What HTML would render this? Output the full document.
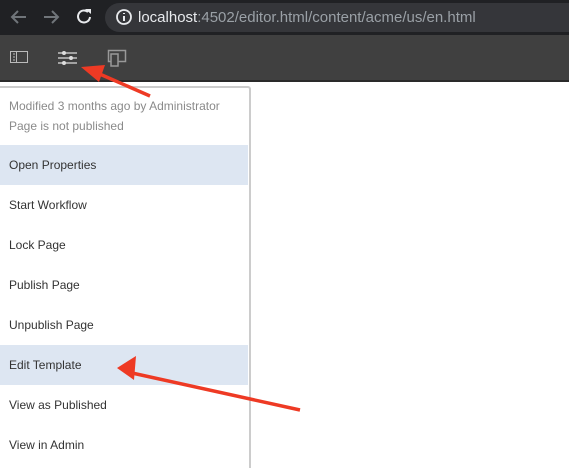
<!DOCTYPE html>
<html style="height:468px;overflow:hidden"><head><style>
html,body{height:468px;overflow:hidden}
body{margin:0;width:569px;background:#fff;font-family:"Liberation Sans",sans-serif;position:relative}
.chrome{position:absolute;left:0;top:0;width:569px;height:35px;background:#202124}
.url{position:absolute;left:105px;top:3px;width:480px;height:29px;border-radius:15px;background:#35363a}
.url span{position:absolute;left:33px;top:6px;font-size:15px;color:#9aa0a6}
.url b{font-weight:normal;color:#e8eaed}
.tb{position:absolute;left:0;top:35px;width:569px;height:45px;background:#404040;border-bottom:2px solid #2a2a2a}
.menu{position:absolute;left:-3px;top:86px;width:250px;height:382px;border:2px solid #ccc;border-bottom:none;border-radius:3px 3px 0 0;background:#fff}
.info{position:absolute;left:9px;top:97px;font-size:12px;color:#8a8a8a;line-height:19.5px}
.item{position:absolute;left:0;width:248px;height:40px;line-height:40px;font-size:12px;color:#333;padding-left:9px;box-sizing:border-box}
.hl{background:#dde6f2}
</style></head><body>
<div class="chrome">
<svg width="100" height="35" style="position:absolute;left:0;top:0">
<path d="M26 17H12M18 11l-6 6 6 6" stroke="#70757a" stroke-width="2" fill="none"/>
<path d="M44 17h14M52 11l6 6-6 6" stroke="#70757a" stroke-width="2" fill="none"/>
<path d="M88 12a6 6 0 1 0 2 5" stroke="#e8eaed" stroke-width="2" fill="none"/><path d="M85 9h6v5z" fill="#e8eaed"/>
</svg>
<div class="url"><svg width="20" height="20" style="position:absolute;left:10px;top:5px"><circle cx="9" cy="9" r="7" stroke="#e8eaed" stroke-width="1.8" fill="none"/><path d="M9 8v5M9 5v1" stroke="#e8eaed" stroke-width="2"/></svg><span><b>localhost</b>:4502/editor.html/content/acme/us/en.html</span></div>
</div>
<div class="tb">
<svg width="140" height="45">
<rect x="10.5" y="16.5" width="17" height="11" fill="none" stroke="#bbb"/><path d="M13 19h2M13 22h2M13 25h2M16.5 17v10" stroke="#bbb"/>
<path d="M58 18h19M58 23h19M58 28h19" stroke="#ddd" stroke-width="1.3"/><circle cx="64" cy="18" r="2" fill="#ddd"/><circle cx="71" cy="23" r="2" fill="#ddd"/><circle cx="64" cy="28" r="2" fill="#ddd"/>
<rect x="108.5" y="15.5" width="17" height="11" fill="none" stroke="#999" stroke-width="1.5"/><rect x="111" y="19" width="7" height="12" fill="#404040" stroke="#999" stroke-width="1.5"/>
</svg>
</div>
<div class="menu"></div>
<div class="info">Modified 3 months ago by Administrator<br>Page is not published</div>
<div class="item hl" style="top:145px">Open Properties</div>
<div class="item" style="top:185px">Start Workflow</div>
<div class="item" style="top:225px">Lock Page</div>
<div class="item" style="top:265px">Publish Page</div>
<div class="item" style="top:305px">Unpublish Page</div>
<div class="item hl" style="top:345px">Edit Template</div>
<div class="item" style="top:385px">View as Published</div>
<div class="item" style="top:425px">View in Admin</div>
<svg width="569" height="468" style="position:absolute;left:0;top:0">
<path d="M150 96L95 72" stroke="#ee3a24" stroke-width="3.5"/><path d="M81 67l24-2-6 17z" fill="#ee3a24"/>
<path d="M300 410L132 373" stroke="#ee3a24" stroke-width="3.5"/><path d="M117 368l19-12 -2 24z" fill="#ee3a24"/>
</svg>
</body></html>
